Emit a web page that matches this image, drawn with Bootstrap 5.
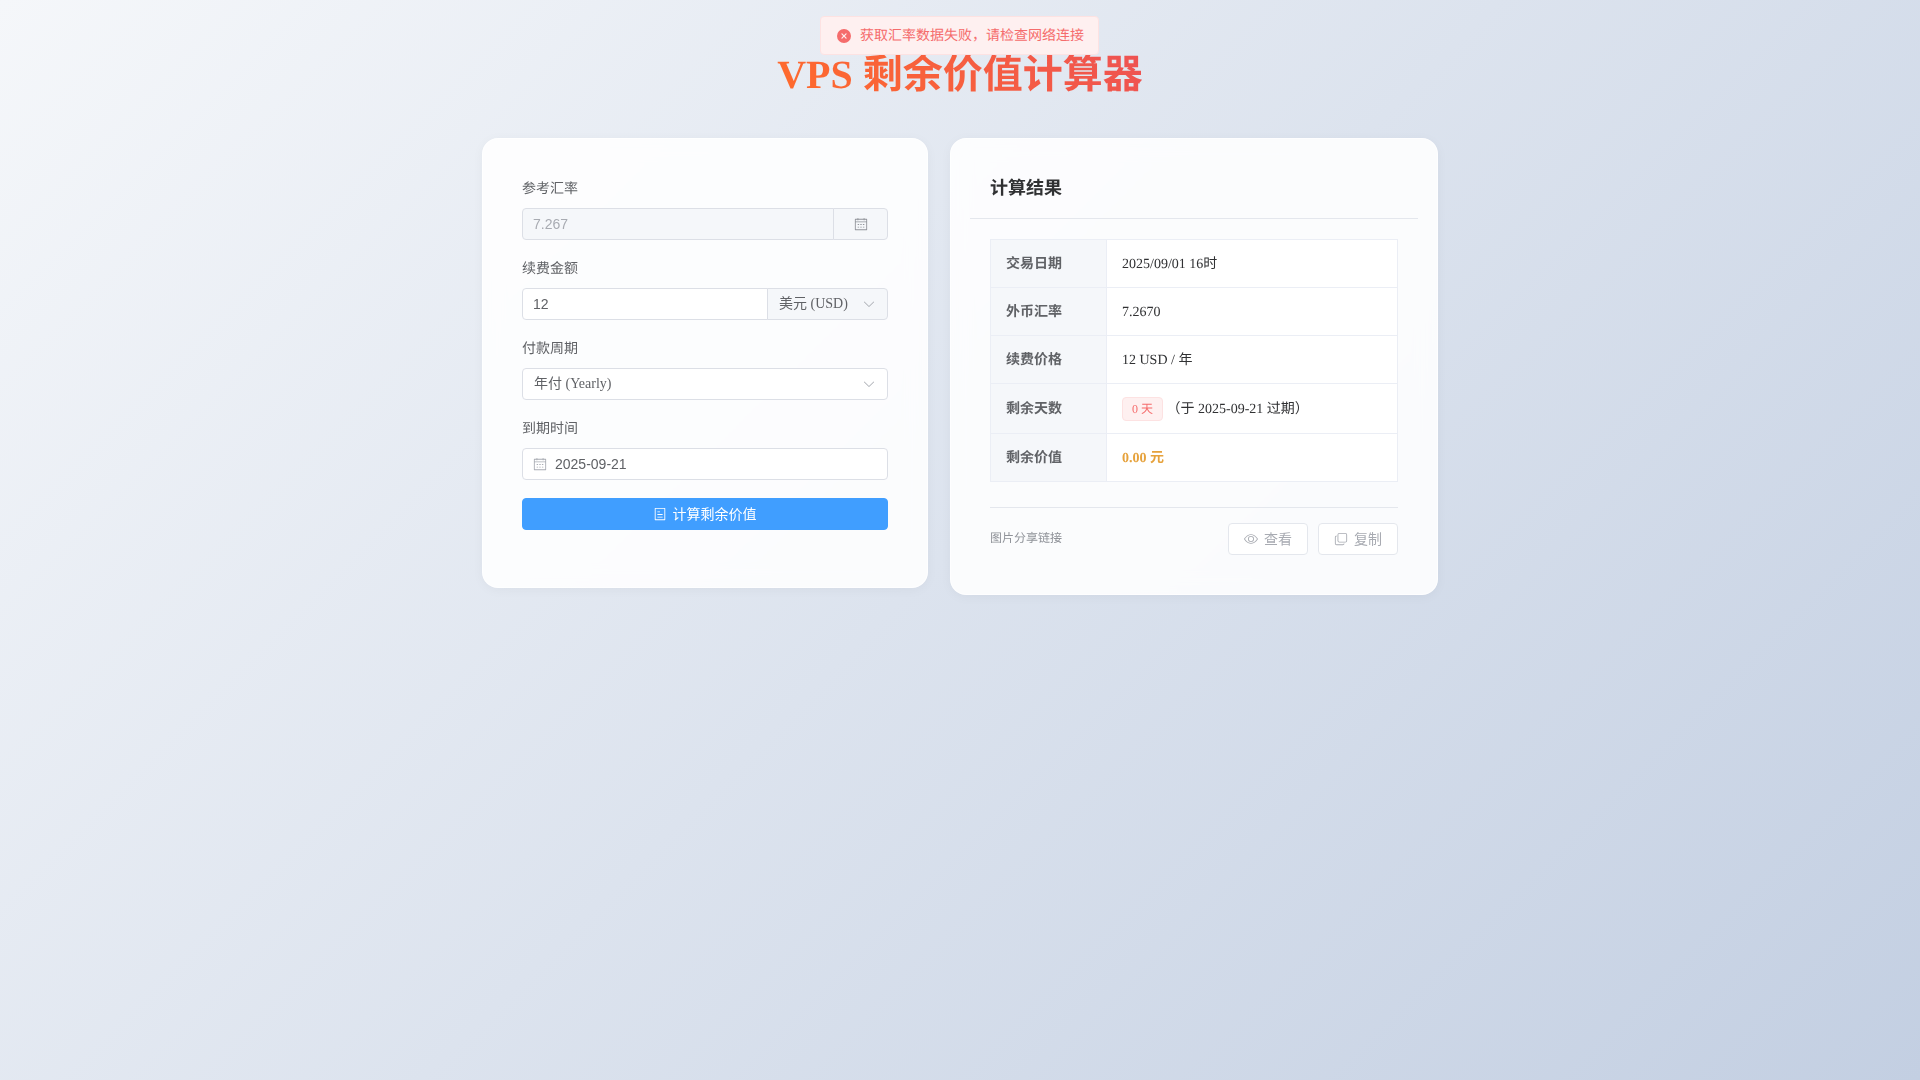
<!DOCTYPE html>
<html lang="zh-CN">
<head>
<meta charset="utf-8">
<title>VPS 剩余价值计算器</title>
<link href="https://cdn.jsdelivr.net/npm/bootstrap@5.3.0/dist/css/bootstrap.min.css" rel="stylesheet">
<style>
html,body{height:100%}
body{font-family:"Liberation Serif","Noto Sans CJK SC",serif;font-size:14px;color:#303133;background:linear-gradient(135deg,#f5f7fa 0%,#c3cfe2 100%);min-height:1080px;text-rendering:geometricPrecision}
.ico{width:1em;height:1em;fill:currentColor;flex:none}
.punct{font-family:"Noto Sans CJK TC",serif}
.toast-msg{top:16px;left:820px;width:279px;height:39px;background:#fef0f0;border:1px solid #fde2e2;border-radius:4px;color:#f56c6c;padding:0 15px;z-index:10;gap:8px}
.toast-msg .ico{font-size:16px}
.page-title{font-size:40px;line-height:48px;font-weight:700;margin:0;padding-top:51px;padding-bottom:39px;text-align:center}
.page-title span{background:linear-gradient(45deg,#ff6b2b,#ee5253);-webkit-background-clip:text;background-clip:text;color:transparent}
.main-row{width:956px;margin:0 auto;gap:22px}
.panel{background:rgba(255,255,255,.88);border:1px solid rgba(255,255,255,.7);border-radius:16px;box-shadow:0 2px 12px rgba(0,0,0,.04);-webkit-backdrop-filter:blur(10px);backdrop-filter:blur(10px)}
.panel-left{width:446px;padding:39px}
.panel-right{width:488px;padding:0 19px 39px}
.field{margin-bottom:18px}
.field-label{display:block;color:#606266;line-height:22px;padding-top:1px;margin-bottom:7px}
.form-control,.form-select,.input-group-text{height:32px;font-size:14px;border-color:#dcdfe6;border-radius:4px;color:#606266;padding-top:0;padding-bottom:0}
.form-control{font-family:"Liberation Sans","Noto Sans CJK SC",sans-serif;padding-left:10px;padding-right:10px}
.form-control:disabled{background:#f5f7fa;color:#a8abb2}
.side-box{width:55px;background:#f5f7fa;color:#909399;justify-content:center;padding:0}
.form-select{font-family:"Liberation Serif","Noto Sans CJK SC",serif;padding-left:11px;padding-right:30px;padding-bottom:2px;background-size:14px 14px;background-position:right 11px center;background-image:url("data:image/svg+xml,%3csvg xmlns='http://www.w3.org/2000/svg' viewBox='0 0 1024 1024'%3e%3cpath fill='%23a8abb2' d='M831.872 340.864 512 652.672 192.128 340.864a30.592 30.592 0 0 0-42.752 0 29.12 29.12 0 0 0 0 41.6L489.664 714.24a32 32 0 0 0 44.672 0l340.288-331.712a29.12 29.12 0 0 0 0-41.728 30.592 30.592 0 0 0-42.752 0z'/%3e%3c/svg%3e")}
.cur-select{flex:0 0 121px!important;width:121px!important;background-color:#f5f7fa}
.date-wrap{height:32px;background:#fff;border:1px solid #dcdfe6;border-radius:4px;padding:0 10px;gap:8px;color:#606266}
.date-wrap .ico{font-size:14px;color:#a8abb2}
.date-wrap .form-control{border:0;height:30px;padding:0;background:transparent;box-shadow:none}
.calc-btn{height:32px;width:100%;margin-bottom:18px;background:#409eff;border-color:#409eff;color:#fff;font-size:14px;border-radius:4px;padding:0 1px 0 0;font-family:"Liberation Serif","Noto Sans CJK SC",serif;gap:6px}
.calc-btn .ico{font-size:14px}
.panel-head{height:80px;border-bottom:1px solid #e4e7ed;padding:38px 20px 0;font-size:18px;font-weight:700;color:#303133;line-height:22px}
.panel-inner{padding:0 20px}
.info-table{width:408px;margin:20px 0 25px;border-collapse:collapse;border:1px solid #ebeef5;--bs-table-bg:#fff;--bs-table-color:#303133}
.info-table th,.info-table td{border:1px solid #ebeef5;padding:2px 15px 0;height:48px;font-size:14px;vertical-align:middle;line-height:22px}
.info-table th{width:116px;background:#f5f7fa;color:#606266;font-weight:700}
.info-table tr.tall th,.info-table tr.tall td{height:50px}
.info-table tr.tall td{padding-top:0}
.day-tag{display:inline-block;height:24px;line-height:22px;padding:0 9px;font-size:12px;color:#f56c6c;background:#fef0f0;border:1px solid #fde2e2;border-radius:4px}
.money{color:#e6a23c;font-weight:700}
.share-row{border-top:1px solid #e4e7ed;padding-top:15px}
.share-label{font-size:12px;color:#909399;line-height:32px;margin-top:-1px}
.share-btn{width:80px;height:32px;padding:0;font-size:14px;gap:6px;color:#a8abb2;background:#fff;border:1px solid #e4e7ed;border-radius:4px;font-family:"Liberation Serif","Noto Sans CJK SC",serif}
.share-btn:disabled{color:#a8abb2;background:#fff;border-color:#e4e7ed;opacity:1}
.share-btn .ico{font-size:14px}
.share-gap{gap:10px}
</style>
</head>
<body>
<div class="toast-msg position-fixed d-flex align-items-center">
  <svg class="ico" viewBox="0 0 1024 1024"><path d="M512 64a448 448 0 1 1 0 896 448 448 0 0 1 0-896m0 393.664L407.936 353.6a38.4 38.4 0 1 0-54.336 54.336L457.664 512 353.6 616.064a38.4 38.4 0 1 0 54.336 54.336L512 566.336 616.064 670.4a38.4 38.4 0 1 0 54.336-54.336L566.336 512 670.4 407.936a38.4 38.4 0 1 0-54.336-54.336z"/></svg>
  <span class="text-nowrap">获取汇率数据失败<span class="punct">，</span>请检查网络连接</span>
</div>

<h1 class="page-title"><span>VPS 剩余价值计算器</span></h1>

<div class="main-row d-flex align-items-start">
  <div class="card panel panel-left">
    <div class="field">
      <label class="field-label">参考汇率</label>
      <div class="input-group">
        <input class="form-control" type="text" value="7.267" disabled>
        <span class="input-group-text side-box">
          <svg class="ico" viewBox="0 0 1024 1024"><path d="M128 384v512h768V192H768v32a32 32 0 1 1-64 0v-32H320v32a32 32 0 0 1-64 0v-32H128v128h768v64zm192-256h384V96a32 32 0 1 1 64 0v32h160a32 32 0 0 1 32 32v768a32 32 0 0 1-32 32H96a32 32 0 0 1-32-32V160a32 32 0 0 1 32-32h160V96a32 32 0 0 1 64 0zm-32 384h64a32 32 0 0 1 0 64h-64a32 32 0 0 1 0-64m0 192h64a32 32 0 1 1 0 64h-64a32 32 0 1 1 0-64m192-192h64a32 32 0 0 1 0 64h-64a32 32 0 0 1 0-64m0 192h64a32 32 0 1 1 0 64h-64a32 32 0 1 1 0-64m192-192h64a32 32 0 1 1 0 64h-64a32 32 0 1 1 0-64m0 192h64a32 32 0 1 1 0 64h-64a32 32 0 1 1 0-64"/></svg>
        </span>
      </div>
    </div>
    <div class="field">
      <label class="field-label">续费金额</label>
      <div class="input-group">
        <input class="form-control" type="text" value="12">
        <select class="form-select cur-select"><option>美元 (USD)</option></select>
      </div>
    </div>
    <div class="field">
      <label class="field-label">付款周期</label>
      <select class="form-select"><option>年付 (Yearly)</option></select>
    </div>
    <div class="field">
      <label class="field-label">到期时间</label>
      <div class="date-wrap d-flex align-items-center">
        <svg class="ico" viewBox="0 0 1024 1024"><path d="M128 384v512h768V192H768v32a32 32 0 1 1-64 0v-32H320v32a32 32 0 0 1-64 0v-32H128v128h768v64zm192-256h384V96a32 32 0 1 1 64 0v32h160a32 32 0 0 1 32 32v768a32 32 0 0 1-32 32H96a32 32 0 0 1-32-32V160a32 32 0 0 1 32-32h160V96a32 32 0 0 1 64 0zm-32 384h64a32 32 0 0 1 0 64h-64a32 32 0 0 1 0-64m0 192h64a32 32 0 1 1 0 64h-64a32 32 0 1 1 0-64m192-192h64a32 32 0 0 1 0 64h-64a32 32 0 0 1 0-64m0 192h64a32 32 0 1 1 0 64h-64a32 32 0 1 1 0-64m192-192h64a32 32 0 1 1 0 64h-64a32 32 0 1 1 0-64m0 192h64a32 32 0 1 1 0 64h-64a32 32 0 1 1 0-64"/></svg>
        <input class="form-control" type="text" value="2025-09-21">
      </div>
    </div>
    <button class="btn calc-btn d-flex align-items-center justify-content-center" type="button">
      <svg class="ico" viewBox="0 0 1024 1024"><path d="M192 128v768h640V128zm-32-64h704a32 32 0 0 1 32 32v832a32 32 0 0 1-32 32H160a32 32 0 0 1-32-32V96a32 32 0 0 1 32-32m160 448h384v64H320zm0-192h192v64H320zm0 384h384v64H320z"/></svg>
      <span>计算剩余价值</span>
    </button>
  </div>

  <div class="card panel panel-right">
    <div class="panel-head">计算结果</div>
    <div class="panel-inner">
      <table class="table info-table">
        <tbody>
          <tr><th>交易日期</th><td>2025/09/01 16时</td></tr>
          <tr><th>外币汇率</th><td>7.2670</td></tr>
          <tr><th>续费价格</th><td>12 USD / 年</td></tr>
          <tr class="tall"><th>剩余天数</th><td><span class="day-tag">0 天</span> <span class="punct">（</span>于 2025-09-21 过期<span class="punct">）</span></td></tr>
          <tr><th>剩余价值</th><td><span class="money">0.00 元</span></td></tr>
        </tbody>
      </table>
      <div class="share-row d-flex justify-content-between align-items-start">
        <span class="share-label">图片分享链接</span>
        <div class="d-flex share-gap ms-auto">
          <button class="btn share-btn d-flex align-items-center justify-content-center" disabled>
            <svg class="ico" viewBox="0 0 1024 1024"><path d="M512 160c320 0 512 352 512 352S832 864 512 864 0 512 0 512s192-352 512-352m0 64c-225.28 0-384.128 208.064-436.8 288 52.608 79.872 211.456 288 436.8 288 225.28 0 384.128-208.064 436.8-288-52.608-79.872-211.456-288-436.8-288zm0 64a224 224 0 1 1 0 448 224 224 0 0 1 0-448m0 64a160.192 160.192 0 0 0-160 160c0 88.192 71.744 160 160 160s160-71.808 160-160-71.744-160-160-160"/></svg>
            <span>查看</span>
          </button>
          <button class="btn share-btn d-flex align-items-center justify-content-center" disabled>
            <svg class="ico" viewBox="0 0 1024 1024"><path d="M768 832a128 128 0 0 1-128 128H192A128 128 0 0 1 64 832V384a128 128 0 0 1 128-128v64a64 64 0 0 0-64 64v448a64 64 0 0 0 64 64h448a64 64 0 0 0 64-64z"/><path d="M384 128a64 64 0 0 0-64 64v448a64 64 0 0 0 64 64h448a64 64 0 0 0 64-64V192a64 64 0 0 0-64-64zm0-64h448a128 128 0 0 1 128 128v448a128 128 0 0 1-128 128H384a128 128 0 0 1-128-128V192A128 128 0 0 1 384 64"/></svg>
            <span>复制</span>
          </button>
        </div>
      </div>
    </div>
  </div>
</div>
<script src="https://cdn.jsdelivr.net/npm/bootstrap@5.3.0/dist/js/bootstrap.bundle.min.js"></script>
</body>
</html>
